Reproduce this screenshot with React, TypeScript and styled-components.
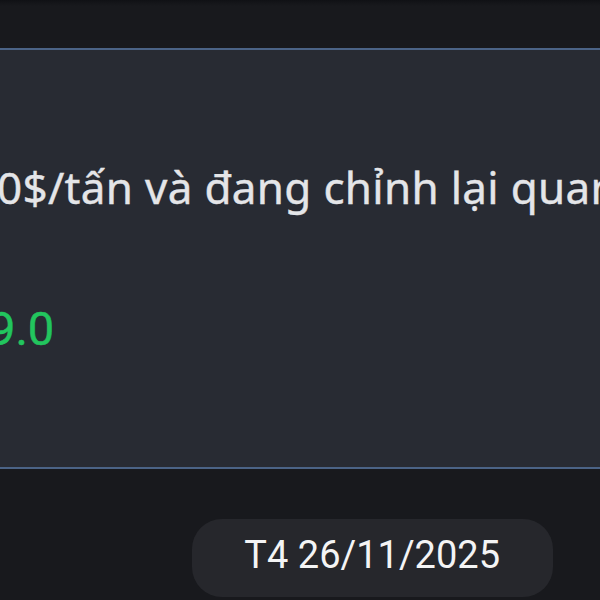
import React from "react";
import styled, { createGlobalStyle } from "styled-components";

const GlobalStyle = createGlobalStyle`
  html, body {
    margin: 0;
    padding: 0;
    background: #18191d;
    overflow: hidden;
  }
  #root {
    width: 600px;
    height: 600px;
    overflow: hidden;
  }
`;

const Screen = styled.div`
  width: 600px;
  height: 600px;
  display: flex;
  flex-direction: column;
  background: #18191d;
  overflow: hidden;
`;

const TopStrip = styled.div`
  height: 48px;
  background: linear-gradient(#101115 0px, #18191d 6px, #18191d 100%);
`;

const MessageCard = styled.div`
  margin: 0 -20px;
  padding: 111px 20px 110px;
  background: #282b33;
  border-top: 2px solid #4b6386;
  border-bottom: 2px solid #4b6386;
  display: flex;
  flex-direction: column;
  gap: 87px;
  overflow: hidden;
`;

const MessageText = styled.div`
  margin-left: -3px;
  white-space: nowrap;
  font-family: "Noto Sans", "Open Sans", sans-serif;
  font-size: 44px;
  letter-spacing: 0.3px;
  line-height: 1.2;
  color: #e4e5e8;
  -webkit-text-stroke: 0.4px #e4e5e8;
`;

const PriceValue = styled.div<{ $up?: boolean }>`
  margin-left: -11px;
  white-space: nowrap;
  font-family: Roboto, "Liberation Sans", sans-serif;
  font-size: 47px;
  line-height: 1.2;
  color: ${(p) => (p.$up ? "#22c55e" : "#ef4444")};
  -webkit-text-stroke: 0.5px ${(p) => (p.$up ? "#22c55e" : "#ef4444")};
`;

const Footer = styled.div`
  flex: 1;
  display: flex;
  justify-content: flex-end;
  align-items: flex-start;
  padding: 50px 47px 0 0;
`;

const DatePill = styled.div`
  padding: 14px 53px 18px 52px;
  border-radius: 30px;
  background: #26272c;
  font-family: Roboto, "Liberation Sans", sans-serif;
  font-size: 38px;
  line-height: 1.2;
  color: #f4f4f5;
  white-space: nowrap;
`;

export default function App() {
  return (
    <Screen>
      <GlobalStyle />
      <TopStrip />
      <MessageCard>
        <MessageText>0$/tấn và đang chỉnh lại quanh vùng giá</MessageText>
        <PriceValue $up>9.0</PriceValue>
      </MessageCard>
      <Footer>
        <DatePill>T4 26/11/2025</DatePill>
      </Footer>
    </Screen>
  );
}
